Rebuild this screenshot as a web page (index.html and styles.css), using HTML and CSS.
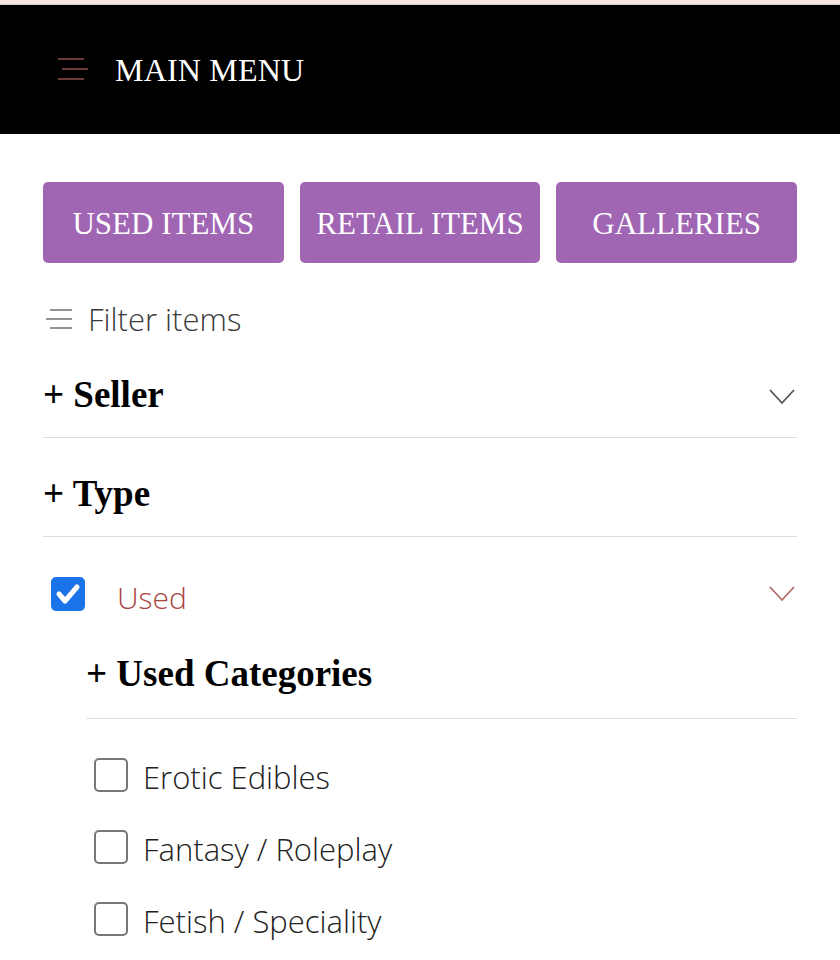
FILE: index.html
```html
<!DOCTYPE html>
<html>
<head>
<meta charset="utf-8">
<link rel="stylesheet" href="styles.css">
</head>
<body>
<div class="topstrip"></div>
<header class="mainbar">
  <svg class="burger" width="32" height="24" viewBox="0 0 32 24">
    <line x1="0" y1="2" x2="26" y2="2" />
    <line x1="4" y1="12" x2="30" y2="12" />
    <line x1="0" y1="22" x2="26" y2="22" />
  </svg>
  <span class="mainbar-title">MAIN MENU</span>
</header>
<main class="content">
  <div class="btn-row">
    <a class="btn">USED ITEMS</a>
    <a class="btn">RETAIL ITEMS</a>
    <a class="btn">GALLERIES</a>
  </div>
  <div class="filter-toggle">
    <svg class="filter-icon" width="28" height="22" viewBox="0 0 28 22">
      <line x1="4" y1="2" x2="26" y2="2" />
      <line x1="0" y1="11" x2="26" y2="11" />
      <line x1="4" y1="20" x2="26" y2="20" />
    </svg>
    <span>Filter items</span>
  </div>
  <div class="section seller">
    <h3 class="section-title">+ Seller</h3>
    <svg class="chev" width="26" height="16" viewBox="0 0 26 16"><polyline points="1,1 13,14 25,1" /></svg>
  </div>
  <div class="section type">
    <h3 class="section-title">+ Type</h3>
  </div>
  <div class="type-row">
    <span class="cb checked">
      <svg width="34" height="34" viewBox="0 0 34 34"><polyline points="8,17 14,24 26,10" /></svg>
    </span>
    <span class="type-label">Used</span>
    <svg class="chev chev-red" width="26" height="16" viewBox="0 0 26 16"><polyline points="1,1 13,14 25,1" /></svg>
  </div>
  <div class="sub">
    <div class="section sub-section">
      <h3 class="section-title">+ Used Categories</h3>
    </div>
    <ul class="cat-list">
      <li><span class="cb"></span><span>Erotic Edibles</span></li>
      <li><span class="cb"></span><span>Fantasy / Roleplay</span></li>
      <li><span class="cb"></span><span>Fetish / Speciality</span></li>
    </ul>
  </div>
</main>
</body>
</html>
```

FILE: styles.css
```css
* { box-sizing: border-box; }
html, body { margin: 0; padding: 0; background: #fff; }
body { font-family: "Liberation Serif", serif; color: #000; }

.topstrip { height: 5px; background: #f7e5e3; border-bottom: 1px solid #d8cccb; }

.mainbar {
  height: 129px;
  background: #000;
  display: flex;
  align-items: center;
  padding-left: 58px;
  gap: 25px;
}
.burger line { stroke: #6e3b3b; stroke-width: 2; }
.burger { margin-top: -2px; }
.mainbar-title {
  color: #fff;
  font-family: "Liberation Serif", serif;
  font-size: 32px;
  letter-spacing: 0.2px;
  margin-top: 2px;
}

.content { padding: 48px 43px 0 43px; }

.btn-row { display: flex; gap: 16px; }
.btn {
  flex: 1;
  height: 81px;
  background: #a066b3;
  border-radius: 5px;
  color: #fff;
  display: flex;
  align-items: center;
  justify-content: center;
  font-family: "Liberation Serif", serif;
  font-size: 31px;
  padding-top: 2px;
}

.filter-toggle {
  display: flex;
  align-items: center;
  gap: 14px;
  height: 74px;
  margin-top: 19px;
  padding-left: 3px;
  font-family: "Open Sans", sans-serif;
  font-weight: 300;
  font-size: 31px;
  color: #3a3a3a;
}
.filter-icon line { stroke: #777; stroke-width: 1.6; }

.section {
  display: flex;
  align-items: center;
  justify-content: space-between;
  border-bottom: 1.5px solid #ddd;
}
.seller { height: 82px; padding-bottom: 4px; }
.type { height: 99px; padding-top: 12px; }
.section-title {
  margin: 0;
  font-family: "Liberation Serif", serif;
  font-weight: bold;
  font-size: 37px;
}
.chev { margin-right: 2px; }
.seller .chev { margin-top: 4px; }
.chev polyline { fill: none; stroke: #555; stroke-width: 1.8; }
.chev-red polyline { stroke: #b06a6a; }

.type-row {
  display: flex;
  align-items: center;
  height: 114px;
  padding-left: 8px;
}
.type-label {
  margin-left: 32px;
  font-family: "Open Sans", sans-serif;
  font-weight: 300;
  font-size: 30px;
  color: #a8443f;
  flex: 1;
  padding-top: 6px;
}

.cb {
  width: 34px;
  height: 34px;
  border: 2px solid #777;
  border-radius: 5px;
  display: inline-flex;
  flex: none;
  background: #fff;
}
.cb.checked { background: #1a73e8; border-color: #1a73e8; }
.cb.checked svg { margin: -2px; }
.cb.checked polyline { fill: none; stroke: #fff; stroke-width: 5; stroke-linecap: round; stroke-linejoin: round; }

.sub { padding-left: 43px; }
.sub-section { height: 103px; padding-top: 12px; margin-top: -35px; }

.cat-list { list-style: none; margin: 0; padding: 20px 0 0 8px; }
.cat-list li {
  display: flex;
  align-items: center;
  gap: 15px;
  height: 72px;
  font-family: "Open Sans", sans-serif;
  font-weight: 300;
  font-size: 31px;
  color: #222;
}
.cat-list li span:last-child { padding-top: 4px; }
```
